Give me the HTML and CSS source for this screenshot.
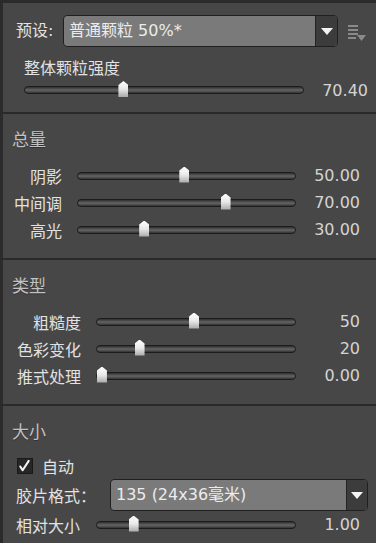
FILE: index.html
```html
<!DOCTYPE html>
<html lang="zh-CN">
<head>
    <meta charset="UTF-8">
    <title>颗粒</title>
    <link rel="stylesheet" href="styles.css">
</head>
<body>
    <div class="panel">
        <section class="section top">
            <div class="preset-row">
                <span class="preset-label">预设:</span>
                <div class="select preset-select">
                    <span class="select-text">普通颗粒 50%*</span>
                    <span class="select-arrow"></span>
                </div>
                <svg class="menu-icon" viewBox="0 0 20 20">
                    <rect x="1" y="2" width="10" height="2" fill="#8a8a8a"/>
                    <rect x="1" y="6" width="10" height="2" fill="#8a8a8a"/>
                    <rect x="1" y="10" width="10" height="2" fill="#8a8a8a"/>
                    <rect x="1" y="14" width="8" height="2" fill="#8a8a8a"/>
                    <polygon points="10,12 19,12 14.5,18" fill="#8a8a8a"/>
                </svg>
            </div>
            <div class="big-label">整体颗粒强度</div>
            <div class="main-slider">
                <div class="track"><span class="thumb" style="left: 35.4%"></span></div>
                <span class="value">70.40</span>
            </div>
        </section>

        <section class="section amount">
            <h2>总量</h2>
            <div class="row">
                <span class="label">阴影</span>
                <div class="track"><span class="thumb" style="left: 49%"></span></div>
                <span class="value">50.00</span>
            </div>
            <div class="row">
                <span class="label">中间调</span>
                <div class="track"><span class="thumb" style="left: 68%"></span></div>
                <span class="value">70.00</span>
            </div>
            <div class="row">
                <span class="label">高光</span>
                <div class="track"><span class="thumb" style="left: 30.5%"></span></div>
                <span class="value">30.00</span>
            </div>
        </section>

        <section class="section type">
            <h2>类型</h2>
            <div class="row">
                <span class="label">粗糙度</span>
                <div class="track"><span class="thumb" style="left: 49%"></span></div>
                <span class="value">50</span>
            </div>
            <div class="row">
                <span class="label">色彩变化</span>
                <div class="track"><span class="thumb" style="left: 21.5%"></span></div>
                <span class="value">20</span>
            </div>
            <div class="row">
                <span class="label">推式处理</span>
                <div class="track"><span class="thumb" style="left: 2.5%"></span></div>
                <span class="value">0.00</span>
            </div>
        </section>

        <section class="section size">
            <h2>大小</h2>
            <label class="check-row">
                <span class="checkbox">
                    <svg viewBox="0 0 16 16">
                        <path d="M3.5 8.5 L6 12.5 L12.5 2.5" fill="none" stroke="#f2f2f2" stroke-width="2.2" stroke-linecap="round" stroke-linejoin="round"/>
                    </svg>
                </span>
                <span>自动</span>
            </label>
            <div class="film-row">
                <span class="film-label">胶片格式：</span>
                <div class="select film-select">
                    <span class="select-text">135 (24x36毫米)</span>
                    <span class="select-arrow"></span>
                </div>
            </div>
            <div class="row">
                <span class="label left">相对大小</span>
                <div class="track"><span class="thumb" style="left: 18.5%"></span></div>
                <span class="value">1.00</span>
            </div>
        </section>
    </div>
</body>
</html>
```

FILE: styles.css
```css
* {
    margin: 0;
    padding: 0;
    box-sizing: border-box;
}

body {
    width: 376px;
    height: 543px;
    overflow: hidden;
    background: #474747;
    font-family: "DejaVu Sans", "Noto Sans CJK SC", sans-serif;
    font-size: 16px;
    color: #e2e2e2;
}

.panel {
    height: 543px;
    border-left: 3px solid #2b2b2b;
    border-top: 3px solid #2b2b2b;
    background: #474747;
}

.section {
    border-bottom: 2px solid #2a2a2a;
}

.section h2 {
    font-size: 17px;
    font-weight: normal;
    line-height: 24px;
    height: 24px;
    padding-left: 9px;
    margin-bottom: 10px;
    color: #c2c2c2;
    text-shadow: 0 1px 0 #333;
}

/* top section */
.top {
    padding: 12px 0 12px 0;
    height: 111px;
}

.preset-row {
    display: flex;
    align-items: center;
    height: 32px;
}

.preset-label {
    width: 60px;
    padding-left: 13px;
    line-height: 32px;
}

.select {
    display: flex;
    height: 32px;
    border: 1px solid #202020;
    border-radius: 4px;
    background: #7a7a7a;
    overflow: hidden;
}

.select-text {
    flex: 1;
    line-height: 30px;
    padding-left: 5px;
    color: #ececec;
    white-space: nowrap;
}

.select-arrow {
    width: 22px;
    background: #3c3c3c;
    border-left: 1px solid #242424;
    display: flex;
    align-items: center;
    justify-content: center;
}

.select-arrow::after {
    content: '';
    border-left: 6px solid transparent;
    border-right: 6px solid transparent;
    border-top: 7px solid #f4f4f4;
}

.preset-select {
    width: 275px;
}

.menu-icon {
    width: 20px;
    height: 20px;
    margin-left: 9px;
    margin-top: 4px;
}

.big-label {
    height: 22px;
    line-height: 22px;
    margin-top: 11px;
    padding-left: 21px;
}

.main-slider {
    display: grid;
    grid-template-columns: 280px 1fr;
    align-items: center;
    height: 20px;
    padding-left: 21px;
    padding-right: 8px;
}

/* slider */
.track {
    position: relative;
    height: 8px;
    border: 1px solid #1c1c1c;
    border-radius: 4px;
    background: linear-gradient(#2e2e2e 0%, #5e5e5e 45%, #5e5e5e 60%, #333 100%);
}

.thumb {
    position: absolute;
    top: -6px;
    width: 10px;
    height: 16px;
    margin-left: -5px;
    background: linear-gradient(#ffffff 0%, #e8e8e8 50%, #a8a8a8 100%);
    clip-path: polygon(50% 0, 100% 25%, 100% 100%, 0 100%, 0 25%);
}

.value {
    font-family: "DejaVu Sans", sans-serif;
    font-size: 16px;
    color: #d4d4d4;
    text-align: right;
}

.row {
    display: grid;
    grid-template-columns: var(--label-w) 219px 1fr;
    column-gap: 15px;
    align-items: center;
    height: 27px;
    padding-right: 16px;
}

.row .label {
    text-align: right;
    white-space: nowrap;
}

.amount {
    --label-w: 59px;
    padding-top: 14px;
    height: 146px;
}

.type {
    --label-w: 78px;
    padding-top: 14px;
    height: 146px;
}

.type .row,
.size .row {
    grid-template-columns: var(--label-w) 200px 1fr;
}

.size {
    --label-w: 78px;
    padding-top: 14px;
    border-bottom: none;
}

.row .label.left {
    text-align: left;
    padding-left: 13px;
}

.check-row {
    display: flex;
    align-items: center;
    height: 24px;
    padding-left: 14px;
}

.checkbox {
    width: 16px;
    height: 16px;
    background: #262626;
    border: 1px solid #1a1a1a;
    margin-right: 9px;
    display: flex;
}

.checkbox svg {
    width: 16px;
    height: 16px;
    margin: -1px 0 0 -1px;
}

.film-row {
    display: flex;
    align-items: center;
    height: 32px;
    margin-top: 1px;
}

.film-label {
    width: 107px;
    padding-left: 13px;
}

.film-select {
    width: 258px;
}

.film-select .select-arrow {
    width: 21px;
}
```
